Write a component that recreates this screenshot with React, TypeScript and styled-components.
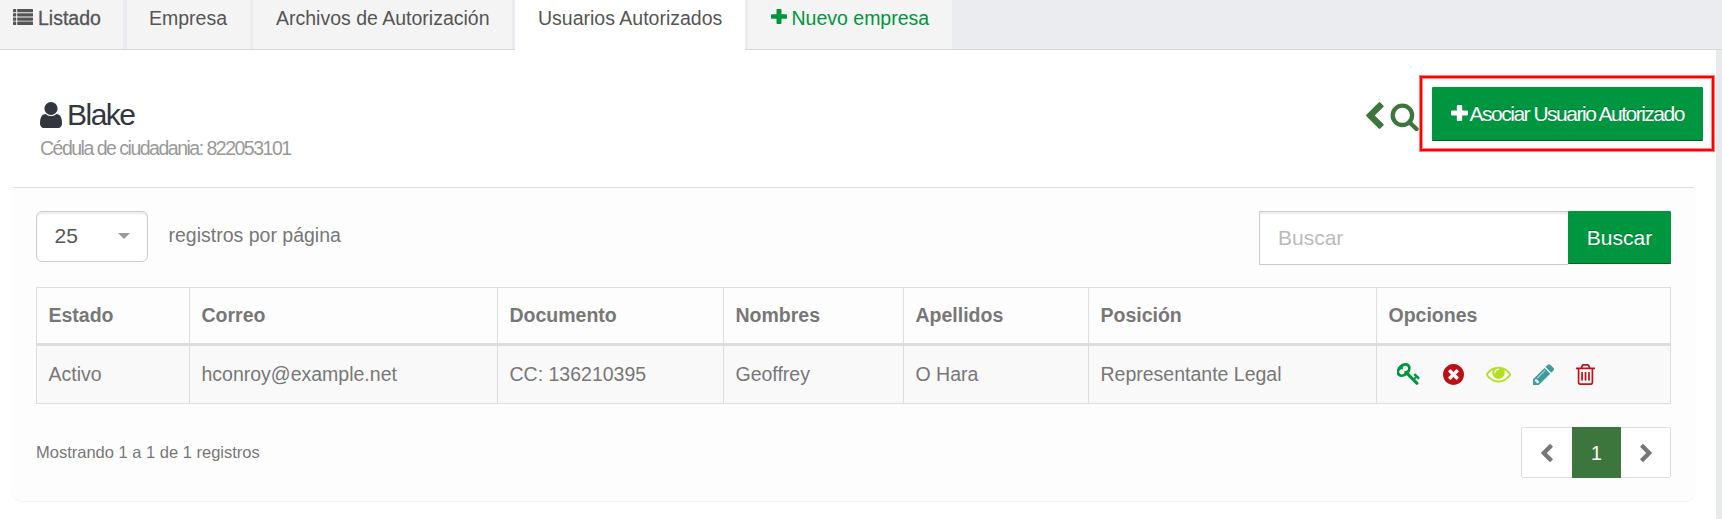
import React from "react";
import styled, { createGlobalStyle } from "styled-components";

const GlobalStyle = createGlobalStyle`
  *, *::before, *::after { box-sizing: border-box; }
  body {
    margin: 0;
    background: #fff;
    color: #777;
    font-family: "Liberation Sans", Arial, sans-serif;
    font-size: 19.5px;
    line-height: 28px;
  }
`;

const Page = styled.div`
  display: flex;
  flex-direction: column;
  height: 519px;
  overflow: hidden;
`;

const TabBar = styled.nav`
  display: flex;
  gap: 3px;
  height: 50px;
  flex: none;
  background: linear-gradient(#ebecf0, #ebecf0) 0 0 / 100% 49px no-repeat #d6d8da;
`;

const Tab = styled.a<{ $width: number; $active?: boolean; $accent?: boolean; $pad?: number }>`
  display: flex;
  align-items: flex-start;
  gap: 5px;
  width: ${(p) => p.$width}px;
  height: ${(p) => (p.$active ? 50 : 49)}px;
  padding: 4px 0 0 ${(p) => p.$pad ?? 23}px;
  background: ${(p) => (p.$active ? "#fff" : "#f4f4f4")};
  color: ${(p) => (p.$accent ? "#00963f" : "#555")};
  white-space: nowrap;
`;

const FirstTab = styled(Tab)`
  margin-right: 1px;
  -webkit-text-stroke: 0.3px #555;
`;

const Content = styled.main`
  flex: 1;
  width: 1716px;
  padding: 0 21px 0 12px;
  background: #fff;
  box-shadow: 6px 0 0 #e8e9ec;
`;

const Header = styled.header`
  display: flex;
  justify-content: space-between;
  align-items: flex-start;
  height: 138px;
  margin: 0 1px;
  padding-left: 27px;
  border-bottom: 1px solid #d5dfe6;
  letter-spacing: -1.5px;
`;

const Identity = styled.div`
  display: flex;
  flex-direction: column;
  padding-top: 47px;
`;

const Name = styled.h3`
  display: flex;
  align-items: center;
  gap: 5px;
  margin: 0;
  height: 36px;
  color: #33353f;
  font-size: 30px;
  font-weight: 400;
  line-height: 36px;
`;

const DocumentId = styled.span`
  margin-top: 1px;
  color: #999;
  font-size: 19.5px;
`;

const Actions = styled.div`
  display: flex;
  align-items: flex-start;
  margin-right: -9px;
  padding-top: 37px;
  color: #3c763d;
`;

const IconLink = styled.a<{ $gap: number }>`
  display: flex;
  margin: 15px ${(p) => p.$gap}px 0 0;
`;

const Highlight = styled.div`
  position: relative;

  &::after {
    content: "";
    position: absolute;
    inset: -11px -11px -10px -12px;
    border: 2px solid #fe0000;
    box-shadow: 0 0 0 1px rgba(254, 0, 0, 0.5), inset 0 0 0 1px rgba(254, 0, 0, 0.45);
  }
`;

const PrimaryButton = styled.button<{ $width: number; $height: number }>`
  display: flex;
  align-items: center;
  justify-content: center;
  gap: 1.5px;
  width: ${(p) => p.$width}px;
  height: ${(p) => p.$height}px;
  padding: 0;
  border: 0;
  border-bottom: 1px solid #00642a;
  border-radius: 1px;
  background: #00963f;
  color: #fff;
  font: inherit;
  font-size: 21px;
  letter-spacing: inherit;
  text-shadow: 0 -1px 0 rgba(0, 0, 0, 0.25);
  white-space: nowrap;
`;

const SearchButton = styled(PrimaryButton)`
  padding-top: 2px;
`;

const Panel = styled.section`
  height: 313px;
  padding: 23px 24px 0;
  border-radius: 0 0 9px 9px;
  background: #fdfdfd;
  box-shadow: 0 1px 1px rgba(0, 0, 0, 0.06);
`;

const Toolbar = styled.div`
  display: flex;
  justify-content: space-between;
  height: 76px;
`;

const PageSize = styled.div`
  display: flex;
  gap: 20.5px;
`;

const SizeSelect = styled.div`
  display: flex;
  justify-content: space-between;
  align-items: center;
  width: 112px;
  height: 51px;
  padding: 0 17px 2px 17.5px;
  border: 1px solid #ccc;
  border-radius: 6px;
  background: #fff;
  box-shadow: inset 0 2px 2px rgba(0, 0, 0, 0.075);
  color: #555;
  font-size: 21px;
`;

const Caret = styled.span`
  border: 6px solid transparent;
  border-top-color: #999;
  border-bottom: 0;
`;

const SizeLabel = styled.label`
  padding-top: 10px;
`;

const SearchGroup = styled.div`
  display: flex;
`;

const SearchInput = styled.input`
  width: 309px;
  height: 54px;
  padding: 0 18px;
  border: 1px solid #ccc;
  border-right: 0;
  border-radius: 1px 0 0 1px;
  background: #fff;
  box-shadow: inset 0 2px 2px rgba(0, 0, 0, 0.075);
  font: inherit;
  font-size: 21px;

  &::placeholder {
    color: #bbb;
    opacity: 1;
  }
`;

const Table = styled.table`
  width: 1635px;
  table-layout: fixed;
  border-collapse: separate;
  border-spacing: 0;
  border: solid #ddd;
  border-width: 1px 0 0 1px;
`;

const HeadCell = styled.th<{ $width: number }>`
  width: ${(p) => p.$width}px;
  height: 58px;
  padding: 0 0 1px 11.5px;
  border: solid #ddd;
  border-width: 0 1px 3px 0;
  text-align: left;
`;

const Cell = styled.td`
  height: 58px;
  padding: 0 0 2px 11.5px;
  border: solid #ddd;
  border-width: 0 1px 1px 0;
  background: #f9f9f9;
`;

const RowActions = styled.div`
  display: flex;
  align-items: center;
  padding: 1px 0 0 8.5px;
`;

const RowAction = styled.a<{ $color: string; $slot: number }>`
  display: flex;
  width: ${(p) => p.$slot}px;
  color: ${(p) => p.$color};
`;

const Footer = styled.div`
  display: flex;
  justify-content: space-between;
  padding-top: 23px;
`;

const Summary = styled.div`
  padding-top: 11px;
  font-size: 16.5px;
`;

const Pagination = styled.div`
  display: flex;
  width: 150px;
  height: 51px;
  border: 1px solid #ddd;
  border-radius: 2px;
  background: #fff;
`;

const PageItem = styled.a<{ $width: number; $active?: boolean }>`
  display: flex;
  flex: none;
  width: ${(p) => p.$width}px;
  align-items: center;
  justify-content: center;
  margin: ${(p) => (p.$active ? "-1px 0" : "0")};
  background: ${(p) => (p.$active ? "#3c763d" : "transparent")};
  color: ${(p) => (p.$active ? "#fff" : "#777")};
`;

const glyphs = {
  user: "M1536 1399q0 109-62.5 187t-150.5 78h-854q-88 0-150.5-78t-62.5-187q0-85 8.5-160.5t31.5-152 58.5-131 94-89 134.5-34.5q131 128 313 128t313-128q76 0 134.5 34.5t94 89 58.5 131 31.5 152 8.5 160.5zm-256-887q0 159-112.5 271.5t-271.5 112.5-271.5-112.5-112.5-271.5 112.5-271.5 271.5-112.5 271.5 112.5 112.5 271.5z",
  plus: "M6.500 0h3q1 0 1 1v4.500H15q1 0 1 1v3q0 1-1 1h-4.500V15q0 1-1 1h-3q-1 0-1-1v-4.500H1q-1 0-1-1v-3q0-1 1-1h4.500V1q0-1 1-1z",
  key: "M832 512q0-80-56-136t-136-56-136 56-56 136q0 42 19 83-41-19-83-19-80 0-136 56t-56 136 56 136 136 56 136-56 56-136q0-42-19-83 41 19 83 19 80 0 136-56t56-136zm851 704q0 17-49 66t-66 49q-9 0-28.5-16t-36.5-33-38.5-40-24.5-26l-96 96 220 220q28 28 28 68 0 42-39 81t-81 39q-40 0-68-28l-671-671q-176 131-365 131-163 0-265.5-102.5t-102.5-265.5q0-160 95-313t248-248 313-95q163 0 265.5 102.5t102.5 265.5q0 189-131 365l355 355 96-96q-3-3-26-24.5t-40-38.5-33-36.5-16-28.5q0-17 49-66t66-49q13 0 23 10 6 6 46 44.5t82 79.5 86.5 86 73 78 28.5 41z",
  remove: "M1277 1122q0-26-19-45l-181-181 181-181q19-19 19-45 0-27-19-46l-90-90q-19-19-46-19-26 0-45 19l-181 181-181-181q-19-19-45-19-27 0-46 19l-90 90q-19 19-19 46 0 26 19 45l181 181-181 181q-19 19-19 45 0 27 19 46l90 90q19 19 46 19 26 0 45-19l181-181 181 181q19 19 45 19 27 0 46-19l90-90q19-19 19-46zm387-226q0 209-103 385.5t-279.5 279.5-385.5 103-385.5-103-279.5-279.5-103-385.5 103-385.5 279.5-279.5 385.5-103 385.5 103 279.5 279.5 103 385.5z",
  eye: "M1664 960q-152-236-381-353 61 104 61 225 0 185-131.5 316.5t-316.5 131.5-316.5-131.5-131.5-316.5q0-121 61-225-229 117-381 353 133 205 333.5 326.5t434.5 121.5 434.5-121.5 333.5-326.5zm-720-384q0-20-14-34t-34-14q-125 0-214.5 89.5t-89.5 214.5q0 20 14 34t34 14 34-14 14-34q0-86 61-147t147-61q20 0 34-14t14-34zm848 384q0 34-20 69-140 230-376.5 368.5t-499.5 138.5-499.5-139-376.5-368q-20-35-20-69t20-69q140-229 376.5-368t499.5-139 499.5 139 376.5 368q20 35 20 69z",
  pencil: "M491 1536l91-91-235-235-91 91v107h128v128h107zm523-928q0-22-22-22-10 0-17 7l-542 542q-7 7-7 17 0 22 22 22 10 0 17-7l542-542q7-7 7-17zm-54-192l416 416-832 832h-416v-416zm683 96q0 53-37 90l-166 166-416-416 166-165q36-38 90-38 53 0 91 38l235 234q37 39 37 91z",
  trash: "M704 736v576q0 14-9 23t-23 9h-64q-14 0-23-9t-9-23v-576q0-14 9-23t23-9h64q14 0 23 9t9 23zm256 0v576q0 14-9 23t-23 9h-64q-14 0-23-9t-9-23v-576q0-14 9-23t23-9h64q14 0 23 9t9 23zm256 0v576q0 14-9 23t-23 9h-64q-14 0-23-9t-9-23v-576q0-14 9-23t23-9h64q14 0 23 9t9 23zm128 724v-948h-896v948q0 22 7 40.5t14.5 27 10.5 8.5h832q3 0 10.5-8.5t14.5-27 7-40.5zm-672-1076h448l-48-117q-7-9-17-11h-317q-10 2-17 11zm928 32v64q0 14-9 23t-23 9h-96v948q0 83-47 143.5t-113 60.5h-832q-66 0-113-58.5t-47-141.5v-952h-96q-14 0-23-9t-9-23v-64q0-14 9-23t23-9h309l70-167q15-37 54-63t79-26h320q40 0 79 26t54 63l70 167h309q14 0 23 9t9 23z",
};

type IconProps = { name: keyof typeof glyphs; width: number; height: number; box: string };

const Icon = ({ name, width, height, box }: IconProps) => (
  <svg width={width} height={height} viewBox={box} preserveAspectRatio="none" fill="currentColor">
    <path d={glyphs[name]} />
  </svg>
);

const ListIcon = styled.svg`
  margin-top: 5px;
`;

const PlusSlot = styled.span`
  display: flex;
  margin-top: 5px;
`;

const ButtonPlus = styled.span`
  display: flex;
  margin-bottom: 2px;
`;

const Chevron = ({ right, width, height }: { right?: boolean; width: number; height: number }) => (
  <svg width={width} height={height} viewBox="0 0 18 27" preserveAspectRatio="none" fill="currentColor">
    <path
      transform={right ? "translate(18 0) scale(-1 1)" : undefined}
      d="M.4 12.8 12.7.4q.8-.7 1.6 0l3 3q.8.8 0 1.6L8.700 13.500l8.600 8.500q.8.8 0 1.600l-3 3q-.8.7-1.600 0L.4 14.300q-.7-.8 0-1.500z"
    />
  </svg>
);

const columns = [
  { label: "Estado", value: "Activo", width: 153 },
  { label: "Correo", value: "hconroy@example.net", width: 308 },
  { label: "Documento", value: "CC: 136210395", width: 226 },
  { label: "Nombres", value: "Geoffrey", width: 180 },
  { label: "Apellidos", value: "O Hara", width: 185 },
  { label: "Posición", value: "Representante Legal", width: 288 },
];

export default function App() {
  return (
    <Page>
      <GlobalStyle />
      <TabBar>
        <FirstTab $width={123} $pad={13}>
          <ListIcon width="20" height="16" viewBox="0 0 20 16" fill="currentColor">
            {[0, 4.2, 8.4, 12.6].map((y) => (
              <React.Fragment key={y}>
                <rect x="0" y={y} width="3.2" height="3.3" rx=".4" />
                <rect x="4.2" y={y} width="15.8" height="3.3" rx=".4" />
              </React.Fragment>
            ))}
          </ListIcon>
          Listado
        </FirstTab>
        <Tab $width={123} $pad={22}>Empresa</Tab>
        <Tab $width={259}>Archivos de Autorización</Tab>
        <Tab $width={230} $active>Usuarios Autorizados</Tab>
        <Tab $width={204} $accent $pad={22.5}>
          <PlusSlot><Icon name="plus" width={16} height={15} box="0 0 16 16" /></PlusSlot>
          Nuevo empresa
        </Tab>
      </TabBar>
      <Content>
        <Header>
          <Identity>
            <Name>
              <Icon name="user" width={22} height={26} box="256 128 1280 1536" />
              Blake
            </Name>
            <DocumentId>Cédula de ciudadania: 822053101</DocumentId>
          </Identity>
          <Actions>
            <IconLink $gap={6}><Chevron width={18} height={27} /></IconLink>
            <IconLink $gap={13}>
              <svg width="29" height="29" viewBox="0 0 29 29" fill="none" stroke="currentColor">
                <circle cx="12.4" cy="13.3" r="9.7" strokeWidth="4.3" />
                <path d="M19.200 20 26.500 27" strokeWidth="4.500" strokeLinecap="round" />
              </svg>
            </IconLink>
            <Highlight>
              <PrimaryButton $width={271} $height={54}>
                <ButtonPlus><Icon name="plus" width={17} height={16} box="0 0 16 16" /></ButtonPlus>
                Asociar Usuario Autorizado
              </PrimaryButton>
            </Highlight>
          </Actions>
        </Header>
        <Panel>
          <Toolbar>
            <PageSize>
              <SizeSelect>25<Caret /></SizeSelect>
              <SizeLabel>registros por página</SizeLabel>
            </PageSize>
            <SearchGroup>
              <SearchInput placeholder="Buscar" />
              <SearchButton $width={103} $height={53}>Buscar</SearchButton>
            </SearchGroup>
          </Toolbar>
          <Table>
            <thead>
              <tr>
                {columns.map((c) => <HeadCell key={c.label} $width={c.width}>{c.label}</HeadCell>)}
                <HeadCell $width={294}>Opciones</HeadCell>
              </tr>
            </thead>
            <tbody>
              <tr>
                {columns.map((c) => <Cell key={c.label}>{c.value}</Cell>)}
                <Cell>
                  <RowActions>
                    <RowAction $slot={46} $color="#00963f"><Icon name="key" width={23} height={22} box="32 128 1664 1600" /></RowAction>
                    <RowAction $slot={43} $color="#bb1016"><Icon name="remove" width={21} height={21} box="128 128 1536 1536" /></RowAction>
                    <RowAction $slot={47} $color="#b1e01e"><Icon name="eye" width={25} height={21} box="0 192 1792 1536" /></RowAction>
                    <RowAction $slot={43} $color="#419a9c"><Icon name="pencil" width={21} height={21} box="128 128 1515 1536" /></RowAction>
                    <RowAction $slot={20} $color="#c0141b"><Icon name="trash" width={19} height={21} box="192 128 1408 1536" /></RowAction>
                  </RowActions>
                </Cell>
              </tr>
            </tbody>
          </Table>
          <Footer>
            <Summary>Mostrando 1 a 1 de 1 registros</Summary>
            <Pagination>
              <PageItem $width={50}><Chevron width={12} height={18} /></PageItem>
              <PageItem $width={49} $active>1</PageItem>
              <PageItem $width={49}><Chevron right width={12} height={18} /></PageItem>
            </Pagination>
          </Footer>
        </Panel>
      </Content>
    </Page>
  );
}
